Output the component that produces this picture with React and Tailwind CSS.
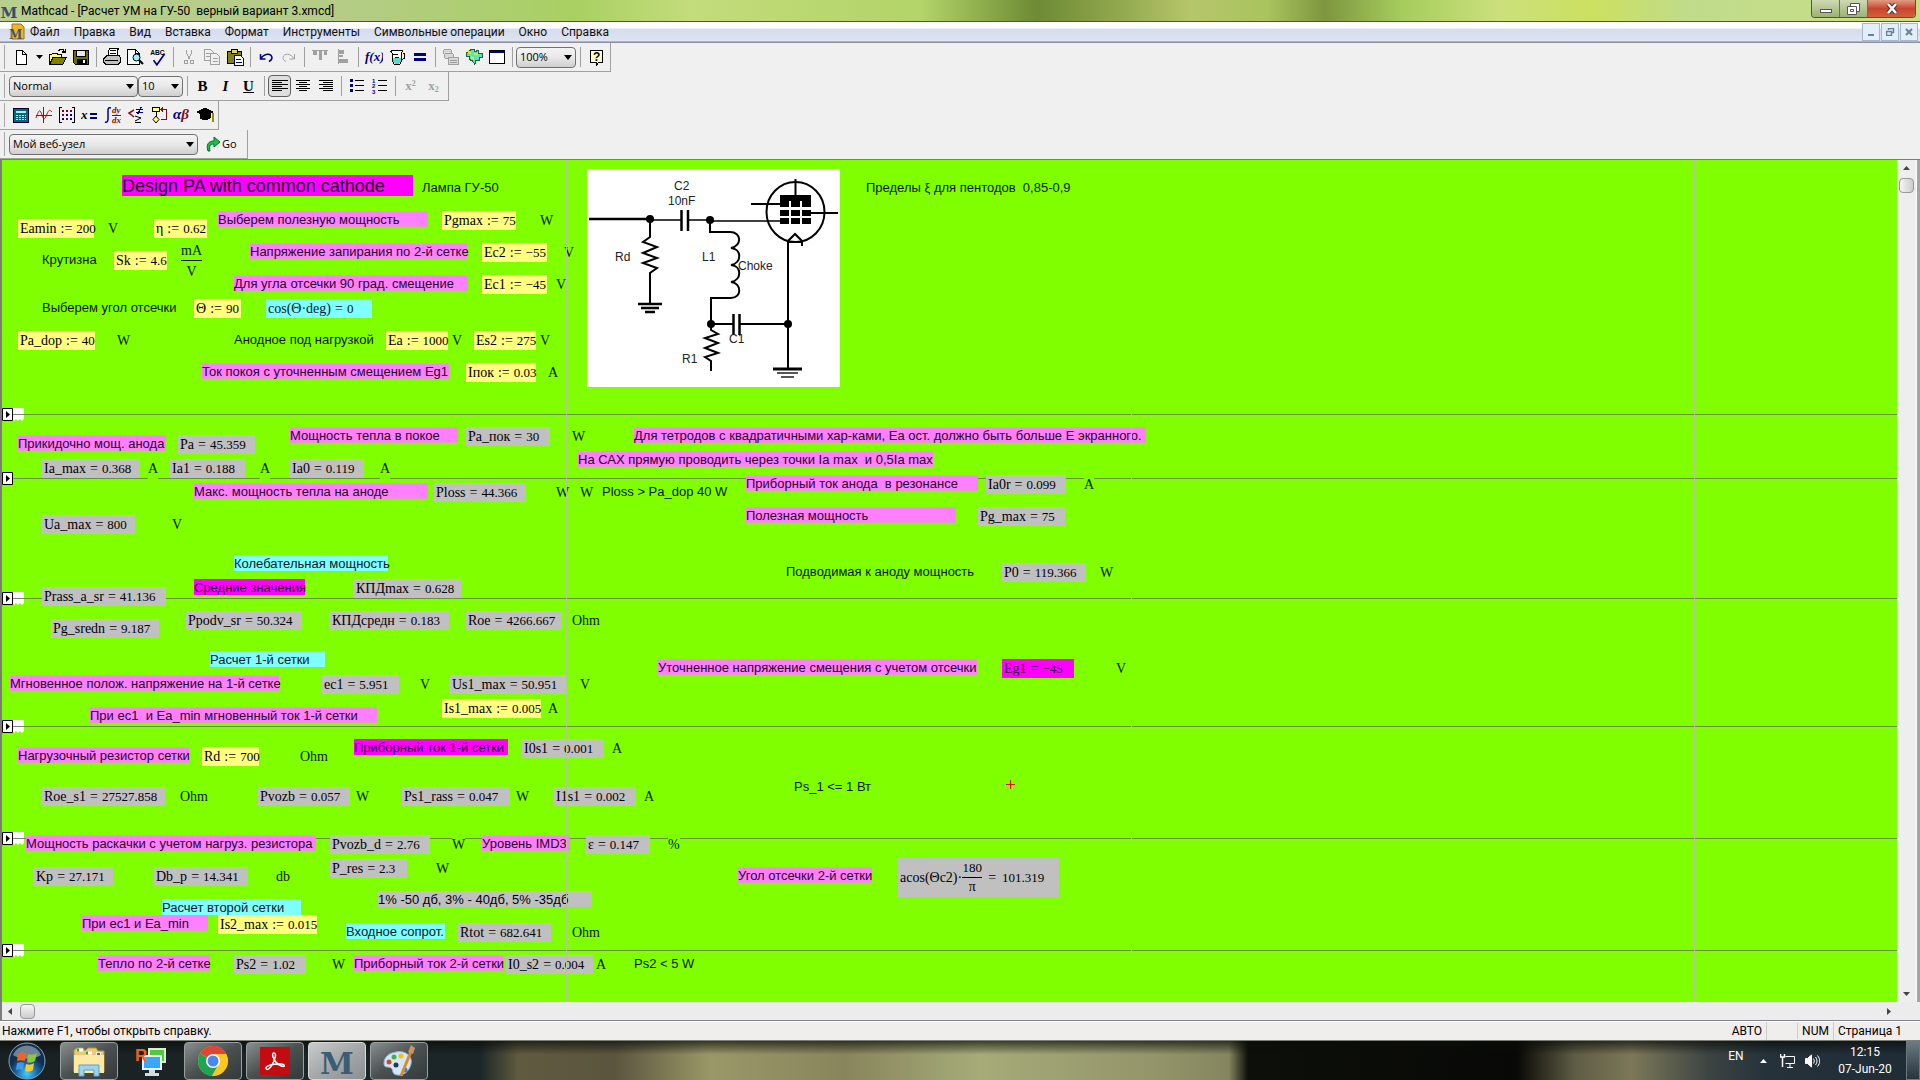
const PAINT = {
  pink: "bg-[#ff80ff] border-y border-[#d8a4b8] text-[#2a062a]",
  magenta: "bg-[#ff00ff] text-[#3a003a]",
  cyan: "bg-[#80ffff] text-[#06202a]",
  yellow: "bg-[#ffff80] text-black",
  gray: "bg-[#c0c0c0] text-black",
  plain: "bg-[#80ff00] text-[#0c1a00]",
};

// text regions: paint, x, y, width (0 = as wide as the text), text
const NOTES = [
  ["plain", 420, 19, 0, "Лампа ГУ-50"],
  ["plain", 864, 19, 0, "Пределы ξ для пентодов  0,85-0,9"],
  ["pink", 216, 51, 210, "Выберем полезную мощность"],
  ["plain", 40, 91, 0, "Крутизна"],
  ["pink", 248, 83, 217, "Напряжение запирания по 2-й сетке"],
  ["pink", 232, 115, 234, "Для угла отсечки 90 град. смещение"],
  ["plain", 40, 139, 0, "Выберем угол отсечки"],
  ["plain", 232, 171, 0, "Анодное под нагрузкой"],
  ["pink", 200, 203, 247, "Ток покоя с уточненным смещением Eg1"],
  ["pink", 16, 275, 148, "Прикидочно мощ. анода"],
  ["pink", 288, 267, 168, "Мощность тепла в покое"],
  ["pink", 632, 267, 512, "Для тетродов с квадратичными хар-ками, Еа ост. должно быть больше Е экранного."],
  ["pink", 576, 291, 355, "На САХ прямую проводить через точки Ia max  и 0,5Ia max"],
  ["pink", 192, 323, 234, "Макс. мощность тепла на аноде"],
  ["plain", 600, 323, 0, "Ploss > Pa_dop 40 W"],
  ["pink", 744, 315, 232, "Приборный ток анода  в резонансе"],
  ["pink", 744, 347, 210, "Полезная мощность"],
  ["cyan", 232, 395, 154, "Колебательная мощность"],
  ["plain", 784, 403, 0, "Подводимая к аноду мощность"],
  ["magenta", 192, 419, 111, "Средние значения"],
  ["cyan", 208, 491, 115, "Расчет 1-й сетки"],
  ["pink", 8, 515, 269, "Мгновенное полож. напряжение на 1-й сетке"],
  ["pink", 656, 499, 319, "Уточненное напряжение смещения с учетом отсечки"],
  ["pink", 88, 547, 287, "При ес1  и Ea_min мгновенный ток 1-й сетки"],
  ["magenta", 352, 579, 154, "Приборный ток 1-й сетки"],
  ["pink", 16, 587, 171, "Нагрузочный резистор сетки"],
  ["plain", 792, 618, 0, "Ps_1 <= 1 Вт"],
  ["pink", 24, 675, 290, "Мощность раскачки с учетом нагруз. резистора"],
  ["pink", 480, 675, 88, "Уровень IMD3"],
  ["pink", 736, 707, 134, "Угол отсечки 2-й сетки"],
  ["gray", 376, 731, 214, "1% -50 дб, 3% - 40дб, 5% -35дб"],
  ["cyan", 160, 739, 139, "Расчет второй сетки"],
  ["pink", 80, 755, 126, "При ес1 и Ea_min"],
  ["cyan", 344, 763, 99, "Входное сопрот."],
  ["pink", 96, 795, 112, "Тепло по 2-й сетке"],
  ["pink", 352, 795, 149, "Приборный ток 2-й сетки"],
  ["plain", 632, 795, 0, "Ps2 < 5 W"],
];

// math regions: paint, x, y, width, name, operator, value
const FORMULAS = [
  ["yellow", 440, 51, 74, "Pgmax", ":=", "75"],
  ["yellow", 16, 59, 76, "Eamin", ":=", "200"],
  ["yellow", 152, 59, 53, "η", ":=", "0.62"],
  ["yellow", 112, 91, 53, "Sk", ":=", "4.6"],
  ["yellow", 480, 83, 65, "Ec2", ":=", "−55"],
  ["yellow", 480, 115, 65, "Ec1", ":=", "−45"],
  ["yellow", 192, 139, 47, "Θ", ":=", "90"],
  ["cyan", 264, 139, 106, "cos(Θ·deg)", "=", "0"],
  ["yellow", 16, 171, 77, "Pa_dop", ":=", "40"],
  ["yellow", 384, 171, 62, "Ea", ":=", "1000"],
  ["yellow", 472, 171, 62, "Es2", ":=", "275"],
  ["yellow", 464, 203, 70, "Iпок", ":=", "0.03"],
  ["gray", 176, 275, 77, "Pa", "=", "45.359"],
  ["gray", 464, 267, 84, "Pa_пок", "=", "30"],
  ["gray", 40, 299, 98, "Ia_max", "=", "0.368"],
  ["gray", 168, 299, 75, "Ia1", "=", "0.188"],
  ["gray", 288, 299, 74, "Ia0", "=", "0.119"],
  ["gray", 432, 323, 92, "Ploss", "=", "44.366"],
  ["gray", 984, 315, 80, "Ia0r", "=", "0.099"],
  ["gray", 976, 347, 87, "Pg_max", "=", "75"],
  ["gray", 40, 355, 93, "Ua_max", "=", "800"],
  ["gray", 1000, 403, 84, "P0", "=", "119.366"],
  ["gray", 352, 419, 107, "КПДmax", "=", "0.628"],
  ["gray", 40, 427, 124, "Prass_a_sr", "=", "41.136"],
  ["gray", 49, 459, 108, "Pg_sredn", "=", "9.187"],
  ["gray", 184, 451, 116, "Ppodv_sr", "=", "50.324"],
  ["gray", 328, 451, 119, "КПДсредн", "=", "0.183"],
  ["gray", 464, 451, 96, "Roe", "=", "4266.667"],
  ["magenta", 1000, 499, 72, "Eg1", "=", "−45"],
  ["gray", 320, 515, 77, "ec1", "=", "5.951"],
  ["gray", 448, 515, 116, "Us1_max", "=", "50.951"],
  ["yellow", 440, 539, 99, "Is1_max", ":=", "0.005"],
  ["gray", 520, 579, 82, "I0s1", "=", "0.001"],
  ["yellow", 200, 587, 57, "Rd", ":=", "700"],
  ["gray", 40, 627, 123, "Roe_s1", "=", "27527.858"],
  ["gray", 256, 627, 92, "Pvozb", "=", "0.057"],
  ["gray", 400, 627, 108, "Ps1_rass", "=", "0.047"],
  ["gray", 552, 627, 82, "I1s1", "=", "0.002"],
  ["gray", 328, 675, 100, "Pvozb_d", "=", "2.76"],
  ["gray", 584, 675, 64, "ε", "=", "0.147"],
  ["gray", 328, 699, 77, "P_res", "=", "2.3"],
  ["gray", 32, 707, 79, "Kp", "=", "27.171"],
  ["gray", 152, 707, 94, "Db_p", "=", "14.341"],
  ["yellow", 216, 755, 99, "Is2_max", ":=", "0.015"],
  ["gray", 456, 763, 93, "Rtot", "=", "682.641"],
  ["gray", 232, 795, 72, "Ps2", "=", "1.02"],
  ["gray", 504, 795, 87, "I0_s2", "=", "0.004"],
];

const UNITS = [
  [538, 51, "W"], [106, 59, "V"], [562, 83, "V"], [554, 115, "V"], [115, 171, "W"],
  [450, 171, "V"], [538, 171, "V"], [546, 203, "A"], [570, 267, "W"], [146, 299, "A"],
  [258, 299, "A"], [378, 299, "A"], [554, 323, "W"], [578, 323, "W"], [1082, 315, "A"],
  [170, 355, "V"], [1098, 403, "W"], [570, 451, "Ohm"], [1114, 499, "V"], [418, 515, "V"],
  [578, 515, "V"], [546, 539, "A"], [610, 579, "A"], [298, 587, "Ohm"], [178, 627, "Ohm"],
  [354, 627, "W"], [514, 627, "W"], [642, 627, "A"], [450, 675, "W"], [666, 675, "%"],
  [434, 699, "W"], [274, 707, "db"], [570, 763, "Ohm"], [330, 795, "W"], [594, 795, "A"],
];

const AREAS = [254, 318, 438, 566, 678, 790];

const MENUS = ["Файл", "Правка", "Вид", "Вставка", "Формат", "Инструменты", "Символьные операции", "Окно", "Справка"];

function Icon({ children, size = 18 }) {
  return (
    <svg width={size} height={size} viewBox="0 0 18 18" fill="none" stroke="#000" strokeWidth="1" shapeRendering="crispEdges" aria-hidden="true">
      {children}
    </svg>
  );
}

const I = {
  new: <Icon><path d="M4.5 2.5h6l4 4v10h-10z" fill="#fff" /><path d="M10.5 2.5v4h4" /></Icon>,
  open: <Icon size={20}><path d="M1.5 15.5v-9h2l1-1h3l1 1h4v3" fill="#ffff80" /><path d="M1.5 15.5l3-6h12l-3 6z" fill="#808000" /><path d="M9.5 3.5c2-2 4-2 5 0M15.5 1.5v3h-3" /></Icon>,
  save: <Icon><path d="M1.5 2.5h15v14h-13l-2-2z" fill="#6b6b00" /><path d="M4.5 2.5h9v6h-9z" fill="#e8e8e8" /><path d="M5 11h9v5H5z" fill="#000" /><path d="M11 12h2v3h-2z" fill="#fff" stroke="none" /></Icon>,
  print: <Icon size={20}><path d="M5.5 7.5l1-6h8l-1 6" fill="#fff" /><path d="M1.5 10.5l3-3h11l1 2v4l-2 2h-11l-2-2z" fill="#c0c0c0" /><path d="M3 12.5h11M4 15.5h9M7.500 3.500h5M7.500 5.500h5" /><path d="M11 11h2v1h-2z" fill="#dddd00" stroke="none" /></Icon>,
  preview: <Icon><path d="M1.5 1.500h8l4 4v11h-12z" fill="#fff" /><path d="M9.500 1.500v4h4" /><circle cx="10.500" cy="9.500" r="3.500" fill="#a0f0ff" shapeRendering="auto" /><path d="M13 12l4 4" strokeWidth="2" shapeRendering="auto" /></Icon>,
  spell: <Icon size={20}><text x="2" y="7" fontSize="6" fontWeight="bold" fontFamily="Liberation Sans" fill="#000" stroke="none">ABC</text><path d="M5 12l3 4 7-10" stroke="#000090" strokeWidth="1.500" shapeRendering="auto" /></Icon>,
  cut: <Icon><g stroke="#a0a0a0"><path d="M6.500 1.500v4l4 6M11.500 1.500v4l-4 6" /><circle cx="6" cy="14" r="2" /><circle cx="12" cy="14" r="2" /></g></Icon>,
  copy: <Icon><g stroke="#a0a0a0" fill="#f0f0f0"><path d="M1.500 1.500h6l3 3v8h-9z" /><path d="M7.500 5.500h6l3 3v8h-9z" /><path d="M3 5.500h4M3 8.500h4M9.500 10.500h5M9.500 13.500h5" /></g></Icon>,
  paste: <Icon><path d="M1.500 3.500h14v12h-14z" fill="#808020" /><path d="M5.500 1.500h6v4h-6z" fill="#d8d860" /><path d="M8.500 7.500h6l3 3v7h-9z" fill="#fff" stroke="#000080" /><path d="M10 11.500h5M10 14.500h6" stroke="#000080" /></Icon>,
  undo: <Icon><path d="M3.500 6v5h5M4 10.500c3-5 10-6 11-1 0 2-1 3-3 4" stroke="#000080" strokeWidth="1.500" shapeRendering="auto" /></Icon>,
  redo: <Icon><path d="M14.500 6v5h-5M14 10.500c-3-5-10-6-11-1 0 2 1 3 3 4" stroke="#a0a0a0" shapeRendering="auto" /></Icon>,
  alignTop: <Icon><path d="M1 2h16v1H1zM2 3h4v4H2zM8 3h3v9H8zM13 3h3v4h-3z" fill="#a0a0a0" stroke="none" /></Icon>,
  alignSide: <Icon><path d="M4 1h1v15H4zM5 2h5v4H5zM5 7h4v2H5zM5 11h9v4H5z" fill="#a0a0a0" stroke="none" /></Icon>,
  fx: <Icon><text x="0" y="13" fontSize="13" fontStyle="italic" fontWeight="bold" fontFamily="Liberation Serif" fill="#000080" stroke="none">f(x)</text></Icon>,
  cup: <Icon><path d="M2.500 3.500l2-1h10l-1 3v8l-2 3h-5l-2-3v-8z" fill="#fff" /><path d="M5 10h8v3l-2 3H7l-2-3z" fill="#60d8c8" stroke="none" /><path d="M5 6.500h5M7 9.500h4M14.500 5.500h2v5l-3 1" /></Icon>,
  eq: <Icon><path d="M3 5h12v3H3zM3 10h12v3H3z" fill="#000080" stroke="none" /></Icon>,
  link: <Icon><g stroke="#a0a0a0" fill="#d8d8d8"><rect x="1.500" y="1.500" width="8" height="5" rx="2" /><rect x="2.500" y="5.500" width="9" height="5" rx="2" /><path d="M6.500 9.500h10v7h-10zM8 12.500h7M8 14.500h7" /></g></Icon>,
  gear: <Icon><path d="M6 1.500h3l1 2 3-1 1 3h3v4h-2l-1 3h-3l-1 4-3-4-3-1v-3h-3v-4h3l1-2z" fill="#60e0c0" stroke="#206040" /><path d="M3 3l3 3M9 6h4M6 9l3 2" stroke="#e8e800" strokeWidth="2" /></Icon>,
  panel: <Icon><path d="M1.500 2.500h15v13h-15z" fill="#fff" /><path d="M2 3h14v2H2z" fill="#000080" stroke="none" /></Icon>,
  help: <Icon><path d="M3.500 2.500h12v12h-4l-2 3v-3h-6z" fill="#ffffc8" /><text x="6" y="13" fontSize="12" fontWeight="bold" fontFamily="Liberation Sans" fill="#000" stroke="none">?</text></Icon>,
  calc: <Icon><rect x="1.500" y="2.500" width="15" height="14" rx="1" fill="#0c6478" stroke="#003" /><path d="M4 5h10v2H4z" fill="#a8f0f0" stroke="none" /><path d="M4 9.500h10M4 11.500h10M4 13.500h10" stroke="#a8e8e8" strokeDasharray="2 1" /></Icon>,
  graph: <Icon><path d="M1 9.500h16M8.500 1v16" stroke="#901010" /><path d="M1 12c3-9 4-9 6-3s3 4 5-1 3-4 5-2" stroke="#c01010" shapeRendering="auto" /></Icon>,
  matrix: <Icon><path d="M4 1.500H1.500v15H4M14 1.500h2.500v15H14" /><g fill="#800020" stroke="none"><path d="M4 4h2v2H4zM8 4h2v2H8zM12 4h2v2h-2zM4 8h2v2H4zM8 12h2v2H8z" /></g><path d="M8 8h2v2H8zM12 8h2v2h-2zM4 12h2v2H4zM12 12h2v2h-2z" fill="#000080" stroke="none" /></Icon>,
  evalx: <Icon><text x="0" y="13" fontSize="13" fontStyle="italic" fontWeight="bold" fontFamily="Liberation Serif" fill="#000" stroke="none">x</text><path d="M9 7h7v2H9zM9 11h7v2H9z" fill="#000080" stroke="none" /></Icon>,
  calculus: <Icon><path d="M7 2c-3-1-3 1-3 3v8c0 2-1 4-3 3" stroke="#000090" strokeWidth="1.500" shapeRendering="auto" /><path d="M8 9.500h9" stroke="#801010" /><g fontSize="9" fontStyle="italic" fontWeight="bold" fontFamily="Liberation Serif" fill="#801010" stroke="none"><text x="8" y="7">dy</text><text x="8" y="17">dx</text></g></Icon>,
  logic: <Icon><path d="M7 4L2 7l5 4" stroke="#801010" strokeWidth="1.500" shapeRendering="auto" /><path d="M9 3.500h7M9 6.500h7M14 1l-3 7" stroke="#000080" strokeWidth="1.500" /><path d="M8 10l6 2-6 3M8 16.500h6" shapeRendering="auto" /></Icon>,
  program: <Icon><path d="M2.500 1.500h7v4h-7z" fill="#ffff80" /><path d="M6 6v4" /><path d="M6 10l3 3.500L6 17l-3-3.500z" fill="#ffff80" shapeRendering="auto" /><path d="M11 3.500h5v10h-5M13 1.500l-2 2 2 2" stroke="#801010" /></Icon>,
  greek: <Icon><text x="0" y="13" fontSize="15" fontStyle="italic" fontWeight="bold" fontFamily="Liberation Serif" stroke="none" fill="#000080">α<tspan fill="#801010">β</tspan></text></Icon>,
  cap: <Icon><path d="M1 6l8-4 8 4-8 4z" fill="#000" /><path d="M4 8v4c3 2 7 2 10 0V8l-5 3z" fill="#000" /><path d="M16.500 7v9" stroke="#909000" strokeWidth="2" /></Icon>,
};

function Tool({ name, label }) {
  return <button type="button" aria-label={label || name} className="flex h-6 w-[23px] shrink-0 items-center justify-center">{I[name]}</button>;
}

function Sep() {
  return <span className="flex w-2 shrink-0 justify-center"><span className="h-5 w-px bg-[#a0a0a0]" /></span>;
}

function Toolbar({ label, children, className }) {
  return (
    <div role="toolbar" aria-label={label} className={`flex h-[29px] items-center self-start border-r border-b border-[#a0a0a0] pl-1 ${className}`}>
      <span className="mr-1 h-6 w-px bg-[#a8a8a8]" />
      {children}
    </div>
  );
}

function Combo({ label, value, className }) {
  return (
    <span className={`relative flex ${className}`}>
      <select aria-label={label} className="h-[21px] w-full appearance-none rounded-sm border border-[#707070] bg-linear-to-b from-[#f4f4f4] via-[#e8e8e8] to-[#cfcfcf] pl-[3px] font-['Open_Sans',sans-serif] text-[11px] leading-4 text-black">
        <option>{value}</option>
      </select>
      <svg className="pointer-events-none absolute top-2 right-1" width="8" height="5" viewBox="0 0 8 5"><path d="M0 0h8L4 5z" /></svg>
    </span>
  );
}

function Lines({ rows, marks }) {
  return (
    <Icon>
      {rows.map(([x, w], i) => <path key={i} d={`M${x} ${3.5 + i * (marks ? 5 : 2)}h${w}`} />)}
      {marks}
    </Icon>
  );
}

function FormatButton({ label, active, children }) {
  return (
    <button
      type="button"
      aria-label={label}
      className={`flex h-[22px] w-[23px] items-center justify-center font-['Liberation_Serif',serif] text-[15px] leading-4 ${active ? "rounded-sm border border-[#606060] bg-[#dedede]" : ""}`}
    >
      {children}
    </button>
  );
}

function TitleBar() {
  return (
    <header className="flex h-[22px] items-start border-b border-[#4f5b2c] bg-[linear-gradient(90deg,#b9cf8e_0%,#b4cc86_18%,#a9d062_30%,#c3dc7c_36%,#b2d468_48%,#6d8a35_54%,#8fa64c_58%,#b6c56a_62%,#a9c45e_66%,#7d9640_69%,#a6cc5c_73%,#cbe07c_78%,#cce060_83%,#c0dc8c_88%,#c9de84_100%)]">
      <MIcon className="mt-[3px] h-[18px] w-[18px] text-[#34506a]" />
      <h1 className="ml-[3px] whitespace-pre font-['Roboto',sans-serif] text-[12px] leading-[22px] text-black">Mathcad - [Расчет УМ на ГУ-50  верный вариант 3.xmcd]</h1>
      <div className="mr-1 ml-auto flex h-[18px] overflow-hidden rounded-b border border-t-0 border-[#4c5a34]">
        <button type="button" aria-label="Свернуть" className="flex w-7 items-center justify-center border-r border-[#66754c] bg-linear-to-b from-[#cfdab4] to-[#9eb070]"><span className="mt-1 h-1 w-3 border border-[#555] bg-white" /></button>
        <button type="button" aria-label="Восстановить" className="flex w-7 items-center justify-center border-r border-[#66754c] bg-linear-to-b from-[#cfdab4] to-[#9eb070]">
          <svg width="13" height="12" viewBox="0 0 13 12" fill="#fff" stroke="#555"><path d="M3.500.5h9v8h-9z" /><path d="M.5 3.500h9v8h-9z" /><path d="M3.500 6.500h3v2h-3z" /></svg>
        </button>
        <button type="button" aria-label="Закрыть" className="flex w-[47px] items-center justify-center bg-linear-to-b from-[#e09a84] via-[#c8442a] to-[#d0603c]">
          <svg width="12" height="11" viewBox="0 0 12 11"><path d="M2 1l8 9M10 1L2 10" stroke="#533" strokeWidth="4.500" /><path d="M2 1l8 9M10 1L2 10" stroke="#fff" strokeWidth="2.500" /></svg>
        </button>
      </div>
    </header>
  );
}

function MIcon({ className }) {
  return (
    <svg className={className} viewBox="0 0 20 18" aria-hidden="true">
      <text x="10" y="16" textAnchor="middle" fontSize="17" fontWeight="bold" fontFamily="DejaVu Serif" fill="currentColor">M</text>
    </svg>
  );
}

function MenuBar() {
  const box = "flex h-[18px] w-[18px] items-center justify-center border border-[#a8b8cc] bg-[#e2eefa]";
  return (
    <nav className="flex h-5 items-center border-b border-[#b0b4c4] bg-linear-to-b from-white from-30% via-[#d6dcec] via-40% to-[#dfe4f2] pr-0.5 pl-2">
      <svg className="mr-[5px] h-[18px] w-[17px]" viewBox="0 0 17 18" aria-hidden="true">
        <path d="M4 1h9l3 3v12H4z" fill="#f0b428" stroke="#a07010" />
        <text x="1" y="16" fontSize="12" fontWeight="bold" fontFamily="DejaVu Serif" fill="#40566e">M</text>
      </svg>
      <div className="flex gap-3.5 font-['Roboto',sans-serif] text-[12px] leading-5 text-[#101010]">
        {MENUS.map((m) => <button type="button" key={m}>{m}</button>)}
      </div>
      <div className="ml-auto flex gap-px text-[#6b7f96]">
        <button type="button" aria-label="Свернуть документ" className={box}><span className="mt-1.5 h-0.5 w-1.5 bg-current" /></button>
        <button type="button" aria-label="Восстановить документ" className={box}>
          <svg width="9" height="8" viewBox="0 0 9 8" fill="none" stroke="currentColor"><path d="M2.500 2V.5h5v4H6" strokeWidth="1.500" /><path d="M.5 3.500h5v4h-5z" strokeWidth="1.500" /></svg>
        </button>
        <button type="button" aria-label="Закрыть документ" className={box}>
          <svg width="8" height="8" viewBox="0 0 8 8"><path d="M1 1l6 6M7 1L1 7" stroke="currentColor" strokeWidth="2" /></svg>
        </button>
      </div>
    </nav>
  );
}

function Toolbars() {
  const full = [1, 16];
  return (
    <div className="flex flex-col border-t border-[#8c8f9c] bg-[#f0f0f0]">
      <Toolbar label="Стандартная" className="pr-[3px]">
        <Tool name="new" label="Создать" />
        <button type="button" aria-label="Шаблоны" className="flex h-6 w-3.5 items-center justify-center"><svg width="7" height="4" viewBox="0 0 7 4"><path d="M0 0h7L3.500 4z" /></svg></button>
        <Tool name="open" label="Открыть" />
        <Tool name="save" label="Сохранить" />
        <Sep />
        <Tool name="print" label="Печать" />
        <Tool name="preview" label="Просмотр" />
        <Tool name="spell" label="Орфография" />
        <Sep />
        <Tool name="cut" label="Вырезать" />
        <Tool name="copy" label="Копировать" />
        <Tool name="paste" label="Вставить" />
        <Sep />
        <Tool name="undo" label="Отменить" />
        <Tool name="redo" label="Повторить" />
        <Sep />
        <Tool name="alignTop" />
        <Tool name="alignSide" />
        <Sep />
        <Tool name="fx" />
        <Tool name="cup" />
        <Tool name="eq" />
        <Sep />
        <Tool name="link" />
        <Tool name="gear" />
        <Tool name="panel" />
        <Sep />
        <Combo label="Масштаб" value="100%" className="w-[60px]" />
        <Sep />
        <Tool name="help" label="Справка" />
      </Toolbar>
      <Toolbar label="Форматирование" className="pr-[3px]">
        <Combo label="Стиль" value="Normal" className="w-[129px]" />
        <Combo label="Размер" value="10" className="w-[45px]" />
        <Sep />
        <FormatButton label="Полужирный"><b>B</b></FormatButton>
        <FormatButton label="Курсив"><b><i>I</i></b></FormatButton>
        <FormatButton label="Подчеркнутый"><b><u>U</u></b></FormatButton>
        <Sep />
        <FormatButton label="По левому краю" active><Lines rows={[full, [1, 10], full, [1, 10], full, [1, 10]]} /></FormatButton>
        <FormatButton label="По центру"><Lines rows={[[2, 14], [5, 8], [2, 14], [5, 8], [2, 14], [5, 8]]} /></FormatButton>
        <FormatButton label="По правому краю"><Lines rows={[[2, 14], [6, 10], [2, 14], [6, 10], [2, 14], [6, 10]]} /></FormatButton>
        <Sep />
        <FormatButton label="Маркеры"><Lines rows={[[7, 9], [7, 9], [7, 9]]} marks={<path d="M2 2h3v3H2zM2 7h3v3H2zM2 12h3v3H2z" fill="#000080" stroke="none" />} /></FormatButton>
        <FormatButton label="Нумерация"><Lines rows={[[7, 9], [7, 9], [7, 9]]} marks={<g fontSize="6" fontWeight="bold" fontFamily="Liberation Sans" fill="#000080" stroke="none"><text x="1" y="6">1</text><text x="1" y="11">2</text><text x="1" y="17">3</text></g>} /></FormatButton>
        <Sep />
        <FormatButton label="Верхний индекс"><span className="text-[13px] font-bold text-[#a0a0a0]">x<sup className="text-[8px]">2</sup></span></FormatButton>
        <FormatButton label="Нижний индекс"><span className="text-[13px] font-bold text-[#a0a0a0]">x<sub className="text-[8px]">2</sub></span></FormatButton>
      </Toolbar>
      <Toolbar label="Математика" className="pr-0.5">
        {["calc", "graph", "matrix", "evalx", "calculus", "logic", "program", "greek", "cap"].map((n) => <Tool key={n} name={n} />)}
      </Toolbar>
      <Toolbar label="Ресурсы" className="pr-2.5">
        <Combo label="Адрес" value="Мой веб-узел" className="w-[189px]" />
        <button type="button" className="ml-2 flex items-center font-['Open_Sans',sans-serif] text-[11px] text-black">
          <svg className="mr-px" width="15" height="17" viewBox="0 0 15 17" aria-hidden="true"><path d="M2 15c-2-6 0-10 6-10V1l6 5-6 5V8c-4 0-5 2-4 7z" fill="#20c040" stroke="#063" /></svg>
          Go
        </button>
      </Toolbar>
    </div>
  );
}

function Schematic() {
  const dots = [35, 44, 52].flatMap((y) => [193, 204, 215].map((x) => [x, y - 3]));
  return (
    <svg className="absolute top-[9px] left-[585px] bg-white" width="253" height="218" viewBox="0 0 253 218" fill="none" stroke="#000" strokeWidth="1.500" role="img" aria-label="Схема каскада">
      <path d="M2 50h61" strokeWidth="2.500" />
      <path d="M63 51h31M101 51h22M123 52h70" />
      <path d="M63 50v18l-7 5 14 5-14 6 14 5-14 5 14 5-7 5v30" strokeWidth="2" />
      <path d="M94.500 41v21M101 41v21" strokeWidth="2.500" />
      <path d="M51 135h24M54 139h18M58 143h10" strokeWidth="2.500" />
      <path d="M123 51v12h20c12 0 12 14 1 16 11 1 11 15 0 17 11 1 11 15 0 17 11 1 11 16 0 16h-20v26" strokeWidth="2" />
      <path d="M124 155h22M153 155h48M124 155v6l7 4-13 4 13 5-13 5 13 5-13 4 6 4v10" strokeWidth="2" />
      <path d="M146.500 145v21M152.500 145v21" strokeWidth="2.500" />
      <path d="M201 72v128" strokeWidth="2" />
      <path d="M186 200h29" strokeWidth="3" />
      <path d="M190 204h21M194 208h13" stroke="#555" strokeWidth="2" />
      <ellipse cx="208.500" cy="43" rx="29" ry="30" strokeWidth="2" />
      <path d="M208.500 10v16M164 35h29M224 44h27M200 73l8-8 7 7v5M201 73h14" strokeWidth="2" />
      <g fill="#000" stroke="none">
        <path d="M193 26h31v6h-31z" />
        {dots.map(([x, y]) => <path key={`${x}-${y}`} d={`M${x} ${y}h9v6h-9z`} />)}
        <circle cx="63" cy="50" r="4" />
        <circle cx="123" cy="51" r="4" />
        <circle cx="124" cy="155" r="4" />
        <circle cx="201" cy="155" r="4" />
      </g>
      <g fontFamily="Liberation Sans" fontSize="12" fill="#222" stroke="none">
        <text x="87" y="21">C2</text>
        <text x="81" y="36">10nF</text>
        <text x="28" y="92">Rd</text>
        <text x="115" y="92">L1</text>
        <text x="151" y="101">Choke</text>
        <text x="142" y="174">C1</text>
        <text x="95" y="194">R1</text>
      </g>
    </svg>
  );
}

function Area({ top }) {
  return (
    <>
      <div className="absolute inset-x-0 h-px bg-[#6c8c4c]" style={{ top }} />
      <svg className="absolute left-0" style={{ top: top - 6 }} width="22" height="13" viewBox="0 0 22 13" aria-hidden="true">
        {top !== 318 && <path d="M10 0h12v11l-2 2-2-2-2 2-2-2-2 2-2-2z" fill="#fff" />}
        <path d="M11 6.500h11" stroke="#808080" />
        <path d="M.5.500h10v12H.5z" fill="#fff" stroke="#000" />
        <path d="M4 3v7l4-3.500z" fill="#000" />
      </svg>
    </>
  );
}

// every region sits where its author dropped it on the sheet
function Worksheet() {
  return (
    <main className="relative min-w-0 flex-1 overflow-hidden bg-[#80ff00]">
      {AREAS.map((top) => <Area key={top} top={top} />)}
      <h2 className="absolute top-[15px] left-[120px] h-[21px] w-[291px] bg-[#ff00ff] font-['Liberation_Sans',sans-serif] text-[18px] leading-[22px] text-[#1c001c]">Design PA with common cathode</h2>
      {NOTES.map(([paint, left, top, width, text]) => (
        <p
          key={`${left}-${top}`}
          className={`absolute flex h-4 items-center whitespace-pre pt-0.5 font-['Liberation_Sans',sans-serif] text-[13px] leading-[14px] ${PAINT[paint]}`}
          style={{ left, top, width: width || undefined }}
        >
          {text}
        </p>
      ))}
      {UNITS.map(([left, top, text]) => (
        <span key={`${left}-${top}`} className="absolute bg-[#80ff00] font-['Liberation_Serif',serif] text-[14px] leading-5 text-[#0c1a00]" style={{ left, top }}>{text}</span>
      ))}
      {FORMULAS.map(([paint, left, top, width, name, op, value]) => (
        <div
          key={`${left}-${top}`}
          className={`absolute flex h-[19px] items-baseline gap-1 whitespace-nowrap pl-0.5 font-['Liberation_Serif',serif] text-[14px] leading-[19px] ${PAINT[paint]}`}
          style={{ left, top, width }}
        >
          <span>{name}</span>
          <span>{op}</span>
          <span className="text-[13px]">{value}</span>
        </div>
      ))}
      <div className="absolute top-[82px] left-[179px] flex w-[21px] flex-col items-center font-['Liberation_Serif',serif] text-[14px] leading-[18px] text-[#0c1a00]">
        <span className="w-full border-b border-current text-center">mA</span>
        <span className="mt-0.5">V</span>
      </div>
      <div className="absolute top-[698px] left-[896px] flex h-[39px] w-[161px] items-center bg-[#c0c0c0] pl-0.5 font-['Liberation_Serif',serif] text-[14px] text-black">
        <span>acos(Θc2)·</span>
        <span className="flex w-5 flex-col items-center leading-[18px]">
          <span className="border-b border-black text-[13px]">180</span>
          <span>π</span>
        </span>
        <span className="ml-1.5">=</span>
        <span className="ml-1.5 text-[13px]">101.319</span>
      </div>
      <Schematic />
      <svg className="absolute top-[620px] left-[1004px]" width="9" height="9" viewBox="0 0 9 9" aria-hidden="true"><path d="M4.500 0v9M0 4.500h9" stroke="#e01000" /></svg>
      <div className="absolute inset-y-0 left-[564px] w-px bg-[#b4c49c]" />
      <div className="absolute inset-y-0 left-[1129px] w-px bg-[#b4c49c]" />
      <div className="absolute inset-y-0 left-[1692px] w-px bg-[#b4c49c]" />
    </main>
  );
}

function Taskbar() {
  const app = "flex h-[38px] w-[58px] items-center justify-center rounded-sm border border-[#9a9f9f] bg-linear-to-br from-[#8a8f8f] via-[#4a5050] to-[#343a3b]";
  return (
    <footer className="flex h-10 shrink-0 items-center border-t border-[#7c8078] bg-[linear-gradient(180deg,#0a0c08b0_0%,#0a0c0800_35%),linear-gradient(90deg,#1a2123_0%,#1c2628_25%,#605a40_27%,#5a553e_32%,#9a9868_37%,#88855c_44%,#a6ab78_51%,#94956a_60%,#85865e_64%,#0d0f0a_65%,#080906_79%,#5e5c44_82%,#7c7858_85%,#3c4443_89%,#25323a_92%,#1e2c36_100%)]">
      <button type="button" aria-label="Пуск" className="ml-2 flex w-[38px] justify-center">
        <svg width="38" height="38" viewBox="0 0 38 38">
          <defs><radialGradient id="orb" cx="50%" cy="85%"><stop offset="0" stopColor="#40d0ff" /><stop offset=".6" stopColor="#1c64a4" /><stop offset="1" stopColor="#12304e" /></radialGradient></defs>
          <circle cx="19" cy="19" r="18" fill="url(#orb)" stroke="#7aa8c8" />
          <path d="M5 13a15 15 0 0 1 28 0c-8 5-20 5-28 0z" fill="#fff" opacity=".4" />
          <path d="M10 12c3-2 6-2 8-1l-1 8c-3-1-5-1-8 0z" fill="#f06428" />
          <path d="M20 12c3 1 6 1 9-1l-2 8c-3 2-6 2-8 1z" fill="#8cc63c" />
          <path d="M9 21c3-1 5-1 7 0l-1 7c-2-1-5-1-7 0z" fill="#3c9ce8" />
          <path d="M18 22c3 1 5 1 8-1l-1 7c-3 2-6 2-8 1z" fill="#fcc828" />
        </svg>
      </button>
      <div className="ml-3.5 flex gap-1">
        <button type="button" aria-label="Проводник" className={app}>
          <svg width="34" height="32" viewBox="0 0 34 32"><path d="M2 5l3-2h6l2 3 3-3h8l2 3h6v21H2z" fill="#e8cc74" stroke="#b89440" /><path d="M5 5h6M14 8h6M24 9h5" stroke="#fff" strokeWidth="3" /><path d="M5 5h2M14 8h2" stroke="#30a050" strokeWidth="3" /><path d="M25 9h3" stroke="#d04030" strokeWidth="2" /><path d="M2 10h30v18H2z" fill="#fbe9a4" /><path d="M7 31V20h20v11h-5v-6H12v6z" fill="#9cd4f0" stroke="#5ca0cc" /></svg>
        </button>
        <button type="button" aria-label="Удаленный рабочий стол" className="flex h-[38px] w-[58px] items-center justify-center">
          <svg width="34" height="34" viewBox="0 0 34 34"><path d="M15 5h16v13H15z" fill="#50c840" stroke="#d8f0d0" strokeWidth="2" /><path d="M9 12h18v13H9z" fill="#38a8f8" stroke="#e8f4fc" strokeWidth="2" /><path d="M15 26h6v3h4v3H11v-3h4z" fill="#d0dce4" /><text x="1" y="17" fontSize="17" fontWeight="bold" fontFamily="Liberation Sans" fill="#f06010">R</text></svg>
        </button>
        <button type="button" aria-label="Chrome" className={app}>
          <svg width="32" height="32" viewBox="0 0 32 32"><circle cx="16" cy="16" r="15" fill="#fcc820" /><path d="M16 16L3 8.500A15 15 0 0 1 29 8.500z" fill="#e04434" /><path d="M16 1a15 15 0 0 1 13 8H16z" fill="#e04434" /><path d="M3 8.500a15 15 0 0 0 12 22.500l6.500-11.500z" fill="#20a454" /><path d="M16 9h13a15 15 0 0 1-14 22l7-12z" fill="#fcc820" /><circle cx="16" cy="16" r="7" fill="#fff" /><circle cx="16" cy="16" r="5.500" fill="#4688f0" /></svg>
        </button>
        <button type="button" aria-label="Acrobat Reader" className={app}>
          <svg width="30" height="28" viewBox="0 0 30 28"><path d="M0 0h30v28H0z" fill="#c40c10" /><path d="M14 6c3 0 1 7-2 12-2 4-6 6-6 3s16-6 18-3-6 1-9-4-3-8-1-8z" fill="none" stroke="#fff" strokeWidth="1.500" /></svg>
        </button>
        <button type="button" aria-label="Mathcad" className="flex h-[38px] w-[58px] items-center justify-center rounded-sm border border-[#d8dada] bg-linear-to-br from-[#c8cccc] via-[#a4a8a8] to-[#8c9090]">
          <MIcon className="h-9 w-9 text-[#3c5c74]" />
        </button>
        <button type="button" aria-label="Paint" className={app}>
          <svg width="32" height="34" viewBox="0 0 32 34"><path d="M13 8c9-2 17 4 15 12s-8 12-14 11-3-5-6-7-7 1-7-5S6 9 13 8z" fill="#d4e8f4" stroke="#88b4d0" /><circle cx="11" cy="13" r="2.500" fill="#48b048" /><circle cx="18" cy="12" r="2.500" fill="#f0c020" /><circle cx="6" cy="18" r="2.500" fill="#e04030" /><circle cx="13" cy="21" r="2.500" fill="#203850" /><circle cx="22" cy="26" r="2.500" fill="#3080e0" /><path d="M29 5L18 32" stroke="#e08828" strokeWidth="3" /><path d="M25 8l3-7 4 3-2 6z" fill="#c89460" /></svg>
        </button>
      </div>
      <div className="ml-auto flex h-full items-center font-['Roboto',sans-serif] text-[12px] leading-[17px] text-white">
        <button type="button" className="mb-2 w-8">EN</button>
        <button type="button" aria-label="Скрытые значки" className="ml-2 w-3"><svg width="7" height="4" viewBox="0 0 7 4"><path d="M0 4h7L3.500 0z" fill="#fff" /></svg></button>
        <svg className="ml-2" width="15" height="15" viewBox="0 0 15 15" fill="none" stroke="#fff"><path d="M5.500 3.500h9v7h-9M10 11v3M7 14.500h6" /><path d="M.5 1v3h4V1M2.500 4v10" strokeWidth="1.500" /></svg>
        <svg className="ml-2.5" width="15" height="14" viewBox="0 0 15 14" fill="none" stroke="#fff"><path d="M.5 4.500h2l4-3.500v12l-4-3.500h-2z" fill="#fff" /><path d="M8.500 4.500c1 2 1 3 0 5M10.500 3c2 3 2 5 0 8M12.500 1.500c3 4 3 7 0 11" /></svg>
        <time className="ml-2.5 w-[70px] text-center">12:15<br />07-Jun-20</time>
        <button type="button" aria-label="Свернуть все окна" className="ml-1.5 h-full w-3.5 border border-[#6c7880] bg-linear-to-b from-[#6c7a84] to-[#28343c]" />
      </div>
    </footer>
  );
}

export default function App() {
  return (
    <div className="flex h-screen flex-col overflow-hidden bg-[#f0f0f0]">
      <TitleBar />
      <MenuBar />
      <Toolbars />
      <div className="flex min-h-0 flex-1 border-t border-l-2 border-[#7c7c7c]">
        <Worksheet />
        <div className="flex w-[19px] flex-col items-center border-l border-[#e4e4e4] bg-[#eeeeee] pt-1.5 pr-0.5 pb-1.5">
          <svg width="7" height="4" viewBox="0 0 7 4"><path d="M0 4h7L3.500 0z" fill="#444" /></svg>
          <span className="mt-2 h-[15px] w-[15px] rounded-sm border border-[#989898] bg-linear-to-r from-[#f6f6f6] to-[#cccccc]" />
          <svg className="mt-auto" width="7" height="4" viewBox="0 0 7 4"><path d="M0 0h7L3.500 4z" fill="#444" /></svg>
        </div>
        <div className="w-1 shrink-0 border-l border-white bg-[#a4a4a8]" />
      </div>
      <div className="flex h-[19px] items-center border-b border-l-2 border-b-[#84848c] border-l-[#7c7c7c] bg-[#ececec] pr-[29px] pl-1.5">
        <svg width="4" height="7" viewBox="0 0 4 7"><path d="M4 0v7L0 3.500z" fill="#444" /></svg>
        <span className="ml-2 h-[15px] w-[15px] rounded-sm border border-[#989898] bg-linear-to-b from-[#f6f6f6] to-[#cccccc]" />
        <svg className="ml-auto" width="4" height="7" viewBox="0 0 4 7"><path d="M0 0v7l4-3.500z" fill="#444" /></svg>
      </div>
      <div role="status" className="flex h-[19px] items-center border-t border-white bg-[#f0eded] pr-[18px] pl-0.5 font-['Roboto',sans-serif] text-[12px] leading-[18px] text-black">
        <span>Нажмите F1, чтобы открыть справку.</span>
        <span className="ml-auto border-r border-[#cccccc] pr-1">АВТО</span>
        <span className="h-4 w-[31px] border-r border-[#cccccc]" />
        <span className="border-r border-[#cccccc] px-1">NUM</span>
        <span className="pl-1">Страница 1</span>
      </div>
      <Taskbar />
    </div>
  );
}
